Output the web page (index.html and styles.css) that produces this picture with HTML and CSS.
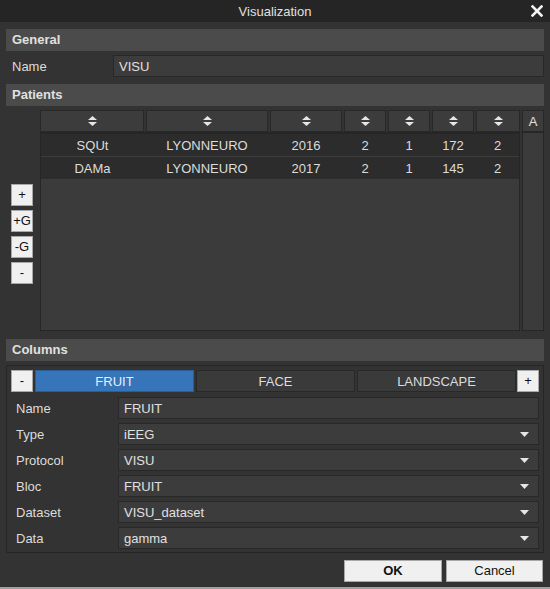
FILE: index.html
```html
<!DOCTYPE html>
<html>
<head>
<meta charset="utf-8">
<title>Visualization</title>
<link rel="stylesheet" href="styles.css">
</head>
<body>
<div class="dialog">
  <div class="titlebar">
    <span></span>
    <span class="title">Visualization</span>
    <span class="close"><svg width="12" height="12" viewBox="0 0 12 12"><path d="M1.5 1.5 L10.5 10.5 M10.5 1.5 L1.5 10.5" stroke="#f2f2f2" stroke-width="2.6" stroke-linecap="square"/></svg></span>
  </div>
  <div class="content">
    <div class="section-head">General</div>
    <div class="general-row">
      <span class="label">Name</span>
      <div class="input"><span class="val">VISU</span></div>
    </div>
    <div class="section-head">Patients</div>
    <div class="patients">
      <div class="side-buttons">
        <button class="light-btn">+</button>
        <button class="light-btn">+G</button>
        <button class="light-btn">-G</button>
        <button class="light-btn">-</button>
      </div>
      <div class="table">
        <div class="table-main">
          <div class="thead">
            <div class="th c1"><svg class="sort" width="9" height="10" viewBox="0 0 9 10"><path d="M0 4 L4.5 0 L9 4 Z M0 6 L4.5 10 L9 6 Z" fill="#e6e6e6"/></svg></div>
            <div class="th c2"><svg class="sort" width="9" height="10" viewBox="0 0 9 10"><path d="M0 4 L4.5 0 L9 4 Z M0 6 L4.5 10 L9 6 Z" fill="#e6e6e6"/></svg></div>
            <div class="th c3"><svg class="sort" width="9" height="10" viewBox="0 0 9 10"><path d="M0 4 L4.5 0 L9 4 Z M0 6 L4.5 10 L9 6 Z" fill="#e6e6e6"/></svg></div>
            <div class="th c4"><svg class="sort" width="9" height="10" viewBox="0 0 9 10"><path d="M0 4 L4.5 0 L9 4 Z M0 6 L4.5 10 L9 6 Z" fill="#e6e6e6"/></svg></div>
            <div class="th c5"><svg class="sort" width="9" height="10" viewBox="0 0 9 10"><path d="M0 4 L4.5 0 L9 4 Z M0 6 L4.5 10 L9 6 Z" fill="#e6e6e6"/></svg></div>
            <div class="th c6"><svg class="sort" width="9" height="10" viewBox="0 0 9 10"><path d="M0 4 L4.5 0 L9 4 Z M0 6 L4.5 10 L9 6 Z" fill="#e6e6e6"/></svg></div>
            <div class="th c7"><svg class="sort" width="9" height="10" viewBox="0 0 9 10"><path d="M0 4 L4.5 0 L9 4 Z M0 6 L4.5 10 L9 6 Z" fill="#e6e6e6"/></svg></div>
          </div>
          <div class="tbody">
            <div class="tr">
              <div class="td c1b">SQUt</div><div class="td c2">LYONNEURO</div><div class="td c3">2016</div><div class="td c4">2</div><div class="td c5">1</div><div class="td c6">172</div><div class="td c7b">2</div>
            </div>
            <div class="tr">
              <div class="td c1b">DAMa</div><div class="td c2">LYONNEURO</div><div class="td c3">2017</div><div class="td c4">2</div><div class="td c5">1</div><div class="td c6">145</div><div class="td c7b">2</div>
            </div>
          </div>
        </div>
        <div class="table-side">
          <div class="th th-a">A</div>
          <div class="scroll"></div>
        </div>
      </div>
    </div>
    <div class="section-head columns-head">Columns</div>
    <div class="columns-panel">
      <div class="tabs">
        <button class="light-btn">-</button>
        <div class="tab active">FRUIT</div>
        <div class="tab">FACE</div>
        <div class="tab">LANDSCAPE</div>
        <button class="light-btn plus">+</button>
      </div>
      <div class="form">
        <div class="form-row"><span class="label">Name</span><div class="input"><span class="val">FRUIT</span></div></div>
        <div class="form-row"><span class="label">Type</span><div class="input"><span class="val">iEEG</span><svg class="arrow" width="9" height="5" viewBox="0 0 9 5"><path d="M0 0 L9 0 L4.5 5 Z" fill="#e6e6e6"/></svg></div></div>
        <div class="form-row"><span class="label">Protocol</span><div class="input"><span class="val">VISU</span><svg class="arrow" width="9" height="5" viewBox="0 0 9 5"><path d="M0 0 L9 0 L4.5 5 Z" fill="#e6e6e6"/></svg></div></div>
        <div class="form-row"><span class="label">Bloc</span><div class="input"><span class="val">FRUIT</span><svg class="arrow" width="9" height="5" viewBox="0 0 9 5"><path d="M0 0 L9 0 L4.5 5 Z" fill="#e6e6e6"/></svg></div></div>
        <div class="form-row"><span class="label">Dataset</span><div class="input"><span class="val">VISU_dataset</span><svg class="arrow" width="9" height="5" viewBox="0 0 9 5"><path d="M0 0 L9 0 L4.5 5 Z" fill="#e6e6e6"/></svg></div></div>
        <div class="form-row"><span class="label">Data</span><div class="input"><span class="val">gamma</span><svg class="arrow" width="9" height="5" viewBox="0 0 9 5"><path d="M0 0 L9 0 L4.5 5 Z" fill="#e6e6e6"/></svg></div></div>
      </div>
    </div>
    <div class="actions">
      <button class="light-btn action default">OK</button>
      <button class="light-btn action">Cancel</button>
    </div>
  </div>
  <div class="bottom-line"></div>
</div>
</body>
</html>
```
FILE: styles.css
```css
* { box-sizing: border-box; }
html, body { margin: 0; padding: 0; }
body {
  width: 550px;
  height: 589px;
  overflow: hidden;
  background: #333333;
  font-family: "Liberation Sans", Arial, sans-serif;
  font-size: 13px;
  color: #dcdcdc;
}
.dialog { width: 550px; height: 589px; display: flex; flex-direction: column; }
.titlebar {
  height: 22px;
  background: #252525;
  display: grid;
  grid-template-columns: 1fr auto 1fr;
  align-items: center;
}
.title { color: #e0e0e0; font-size: 13px; }
.close { justify-self: end; padding-right: 7px; display: flex; }
.content { flex: 1; padding: 7px 6px 0 6px; display: flex; flex-direction: column; }
.section-head {
  height: 22px;
  background: #4b4b4b;
  font-weight: bold;
  color: #e0e0e0;
  padding-left: 6px;
  line-height: 22px;
}
.general-row { display: flex; margin: 4px 0 7px; height: 22px; align-items: center; }
.general-row .label { width: 107px; padding-left: 6px; }
.input {
  flex: 1;
  height: 22px;
  background: #3c3c3c;
  border: 1px solid #282828;
  display: flex;
  align-items: center;
  padding-left: 5px;
  padding-right: 9px;
  color: #e0e0e0;
}
.input .val { flex: 1; }
.general-row .input { padding-left: 5px; }
.patients { display: flex; margin-top: 4px; padding-left: 5px; }
.side-buttons { width: 22px; margin-right: 7px; padding-top: 74px; display: flex; flex-direction: column; gap: 4px; }
.light-btn {
  width: 22px;
  height: 22px;
  padding: 0;
  margin: 0;
  background: #f0f0f0;
  border: 1px solid #a8a8a8;
  color: #111;
  font-family: "Liberation Sans", Arial, sans-serif;
  font-size: 13px;
  line-height: 20px;
  text-align: center;
}
.table { display: flex; gap: 2px; }
.table-main { width: 480px; display: flex; flex-direction: column; }
.thead { display: flex; gap: 2px; height: 22px; }
.th {
  height: 22px;
  background: #3c3c3c;
  border: 1px solid #282828;
  display: flex;
  align-items: center;
  justify-content: center;
}
.c1 { width: 104px; } .c2 { width: 122px; } .c3 { width: 72px; }
.c4 { width: 42px; } .c5 { width: 42px; } .c6 { width: 42px; } .c7 { width: 44px; }
.c1b { width: 103px; } .c7b { width: 43px; }
.tbody {
  height: 199px;
  background: #3b3b3b;
  border: 1px solid #262626;
  border-top: 2px solid #262626;
}
.tr { display: flex; gap: 2px; height: 23px; background: #2c2c2c; border-bottom: 1px solid #3d3d3d; }
.td { display: flex; align-items: center; justify-content: center; color: #dcdcdc; }
.table-side { width: 22px; display: flex; flex-direction: column; }
.th-a { color: #e0e0e0; }
.scroll { height: 199px; background: #3b3b3b; border: 1px solid #262626; }
.columns-head { margin-top: 8px; }
.columns-panel {
  margin-top: 4px;
  height: 188px;
  border: 1px solid #262626;
  padding: 4px 4px 3px 4px;
}
.tabs { display: flex; height: 22px; gap: 2px; }
.tab {
  flex: 1;
  height: 22px;
  background: #3a3a3a;
  border: 1px solid #282828;
  display: flex;
  align-items: center;
  justify-content: center;
  color: #dcdcdc;
}
.tab.active { background: #3675b9; border-color: #2b5e96; color: #e8eef6; }
.tabs .plus { margin-left: -1px; }
.form { margin-top: 5px; display: flex; flex-direction: column; gap: 4px; }
.form-row { display: flex; height: 22px; align-items: center; }
.form-row .label { width: 107px; padding-left: 5px; }
.actions { margin-top: 7px; display: flex; justify-content: flex-end; gap: 4px; padding-right: 1px; }
.action { width: 97px; height: 22px; }
.action.default { width: 98px; font-weight: bold; }
.bottom-line { height: 2px; background: #a0a0a0; margin-top: auto; }
```
